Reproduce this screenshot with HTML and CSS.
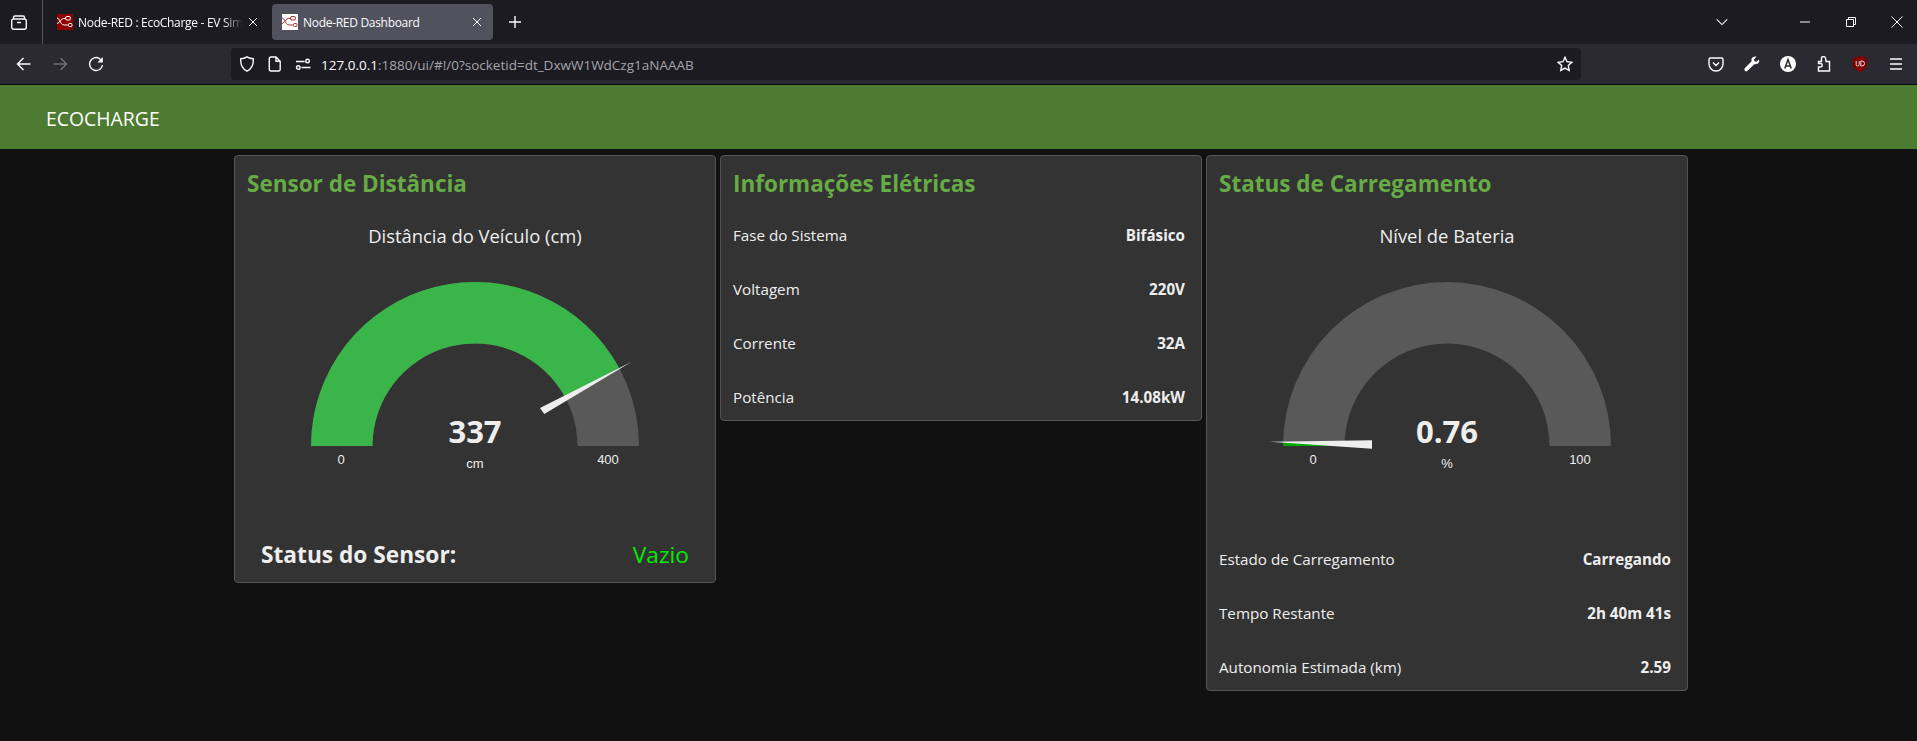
FILE: index.html
```html
<!DOCTYPE html>
<html lang="pt-BR">
<head>
    <meta charset="UTF-8">
    <meta name="viewport" content="width=device-width, initial-scale=1.0">
    <title>Node-RED Dashboard</title>
    <link rel="stylesheet" href="styles.css">
</head>
<body>
    <div class="tabbar">
        <div class="tab-view">
            <svg class="icon" viewBox="0 0 16 16"><path d="M2.500 5V3.500a1.500 1.500 0 0 1 1.500-1.500h8a1.500 1.500 0 0 1 1.500 1.500V5M.7 7a2 2 0 0 1 2-2h10.600a2 2 0 0 1 2 2v6.300a2 2 0 0 1-2 2H2.700a2 2 0 0 1-2-2zM6 8.500h4"/></svg>
        </div>
        <div class="tab">
            <svg class="favicon" viewBox="0 0 16 16"><rect width="16" height="16" fill="#8f0000"/><path d="M0 4c3 0 3 7 7 7h4M9 4.500H6.500C4 4.500 3 9 0 9.500" fill="none" stroke="#fff"/><rect x="8.500" y="2.500" width="5" height="3.500" rx="1.500" fill="none" stroke="#fff"/><rect x="11.500" y="9.500" width="3.500" height="3" rx="1" fill="none" stroke="#fff"/></svg>
            <span class="tab-title fade">Node-RED : EcoCharge - EV Sim</span>
            <svg class="tab-close" viewBox="0 0 10 10"><path d="M1 1l8 8M9 1l-8 8"/></svg>
        </div>
        <div class="tab tab-active">
            <svg class="favicon" viewBox="0 0 16 16"><rect width="16" height="16" fill="#fff"/><path d="M0 4c3 0 3 7 7 7h4M9 4.500H6.500C4 4.500 3 9 0 9.500" fill="none" stroke="#a33"/><rect x="8.500" y="2.500" width="5" height="3.500" rx="1.500" fill="none" stroke="#a33"/><rect x="11.500" y="9.500" width="3.500" height="3" rx="1" fill="none" stroke="#a33"/></svg>
            <span class="tab-title">Node-RED Dashboard</span>
            <svg class="tab-close" viewBox="0 0 10 10"><path d="M1 1l8 8M9 1l-8 8"/></svg>
        </div>
        <svg class="icon new-tab" viewBox="0 0 16 16"><path d="M8 2v12M2 8h12"/></svg>
        <div class="window-controls">
            <svg class="icon chevron" viewBox="0 0 16 16"><path d="M2 5l6 6 6-6"/></svg>
            <svg class="icon win-min" viewBox="0 0 12 12"><path d="M1 6h10"/></svg>
            <svg class="icon win-restore" viewBox="0 0 12 12"><path d="M1.500 3.500h7v7h-7zM3.500 3.500v-2h7v7h-2"/></svg>
            <svg class="icon win-close" viewBox="0 0 12 12"><path d="M.5 .5l11 11M11.500 .5l-11 11"/></svg>
        </div>
    </div>

    <div class="toolbar">
        <svg class="icon nav-back" viewBox="0 0 16 16"><path d="M14.500 8H1.500M7.500 2L1.500 8l6 6"/></svg>
        <svg class="icon nav-forward" viewBox="0 0 16 16"><path d="M1.500 8h13M8.500 2l6 6-6 6"/></svg>
        <svg class="icon nav-reload" viewBox="0 0 16 16"><path d="M14.500 9A6.500 6.500 0 1 1 11.500 2.500L14 5.500"/><path class="icon-fill" d="M14.800 1v5.500H9.300z"/></svg>
        <div class="urlbar">
            <svg class="icon url-shield" viewBox="0 0 16 16"><path d="M8 .8c2 1.200 4 1.800 6.300 2 .3 5.700-1.700 10-6.300 12.400C3.400 12.800 1.400 8.500 1.700 2.800 4 2.600 6 2 8 .8z"/></svg>
            <svg class="icon url-doc" viewBox="0 0 16 16"><path d="M3.800 1h5.200l4.200 4.200v8.300a1.500 1.500 0 0 1-1.500 1.500H3.800a1.500 1.500 0 0 1-1.500-1.500v-11A1.500 1.500 0 0 1 3.800 1zM9 1v4.200h4.200"/></svg>
            <svg class="icon url-perm" viewBox="0 0 16 16"><path d="M1 5.500h8.500M6.500 11.500h9"/><circle cx="12.500" cy="5" r="1.800"/><circle cx="3.300" cy="11.500" r="1.800"/></svg>
            <span class="url-text"><span class="url-host">127.0.0.1</span>:1880/ui/#!/0?socketid=dt_DxwW1WdCzg1aNAAAB</span>
            <svg class="icon url-star" viewBox="0 0 16 16"><path d="M8 1.300l2 4.400 4.800.6-3.500 3.300.9 4.800L8 12.100l-4.200 2.300.9-4.800L1.200 6.300 6 5.700z"/></svg>
        </div>
        <div class="extensions">
            <svg class="icon" viewBox="0 0 16 16"><path d="M2.500 2h11A1.500 1.500 0 0 1 15 3.500V8a7 7 0 0 1-14 0V3.500A1.500 1.500 0 0 1 2.500 2zM5 6.500l3 3 3-3"/></svg>
            <svg class="icon icon-fill" viewBox="0 0 16 16"><path d="M15 3.500l-2.500 2.300-2-.5-.5-2L12.500.8C10.500 0 8 1 7.500 3c-.2.800-.1 1.500.1 2.200L1 12c-1 1-.8 2 0 2.800s2 .8 2.800-.2l6.800-6.600c2.400.8 5.400-1.200 4.400-4.500z"/></svg>
            <svg class="ext-round" viewBox="0 0 16 16"><circle cx="8" cy="8" r="8" fill="#fff"/><path d="M4.800 12.500L8 3.500l3.200 9M6 10h4" fill="none" stroke="#2b2a33" stroke-width="1.500"/></svg>
            <svg class="icon" viewBox="0 0 16 16"><path d="M5.500 5.500V3a2 2 0 0 1 4-1l.5 3.500h3.500v9.500H2.500v-4h2a1.700 1.700 0 0 0 0-3.500h-2V5.500z"/></svg>
            <svg class="ext-round" viewBox="0 0 16 16"><path d="M8 0l7 2v7c0 3-3.500 5.500-7 7-3.500-1.500-7-4-7-7V2z" fill="#800000"/><path d="M4.200 5v3.500a1.500 1.500 0 0 0 3 0V5M8.800 5v5h1.200a2.500 2.500 0 0 0 0-5z" fill="none" stroke="#ddd"/></svg>
            <svg class="icon" viewBox="0 0 16 16"><path d="M2 3h12M2 8h12M2 13h12"/></svg>
        </div>
    </div>

    <header class="app-header">ECOCHARGE</header>

    <main class="content">
        <section class="card">
            <h2>Sensor de Distância</h2>
            <div class="gauge-title">Distância do Veículo (cm)</div>
            <svg class="gauge" viewBox="0 0 480 270">
                <path class="arc-bg" d="M76 188A164 164 0 0 1 404 188H342.500A102.500 102.500 0 0 0 137.500 188Z"/>
                <path class="arc-value" d="M76 188A164 164 0 0 1 384.300 110.100L330.200 139.300A102.500 102.500 0 0 0 137.500 188Z"/>
                <polygon class="needle" points="396.700,103.700 305,150 309.300,156"/>
                <text class="gauge-value" x="240" y="185">337</text>
                <text class="gauge-small" x="106" y="206">0</text>
                <text class="gauge-small" x="240" y="210">cm</text>
                <text class="gauge-small" x="373" y="206">400</text>
            </svg>
            <div class="status-row">
                <span class="status-label">Status do Sensor:</span>
                <span class="status-value">Vazio</span>
            </div>
        </section>

        <section class="card">
            <h2>Informações Elétricas</h2>
            <div class="rows">
                <div class="row"><span>Fase do Sistema</span><b>Bifásico</b></div>
                <div class="row"><span>Voltagem</span><b>220V</b></div>
                <div class="row"><span>Corrente</span><b>32A</b></div>
                <div class="row"><span>Potência</span><b>14.08kW</b></div>
            </div>
        </section>

        <section class="card">
            <h2>Status de Carregamento</h2>
            <div class="gauge-title">Nível de Bateria</div>
            <svg class="gauge" viewBox="0 0 480 270">
                <path class="arc-bg" d="M76 188A164 164 0 0 1 404 188H342.500A102.500 102.500 0 0 0 137.500 188Z"/>
                <path class="arc-low" d="M76 188A164 164 0 0 1 76.050 184.100L137.530 185.550A102.500 102.500 0 0 0 137.500 188Z"/>
                <polygon class="needle" points="62.300,183.700 165,182.300 165,190.700"/>
                <text class="gauge-value" x="240" y="185">0.76</text>
                <text class="gauge-small" x="106" y="206">0</text>
                <text class="gauge-small" x="240" y="210">%</text>
                <text class="gauge-small" x="373" y="206">100</text>
            </svg>
            <div class="rows rows-spaced">
                <div class="row"><span>Estado de Carregamento</span><b>Carregando</b></div>
                <div class="row"><span>Tempo Restante</span><b>2h 40m 41s</b></div>
                <div class="row"><span>Autonomia Estimada (km)</span><b>2.59</b></div>
            </div>
        </section>
    </main>
</body>
</html>
```

FILE: styles.css
```css
* {
    box-sizing: border-box;
}
html, body {
    height: 100%;
}
body {
    margin: 0;
    background-color: #111111;
    color: #eeeeee;
    font-family: "Open Sans", "Noto Sans", sans-serif;
    overflow: hidden;
}
.icon {
    width: 16px;
    height: 16px;
    flex: none;
    fill: none;
    stroke: #fbfbfe;
    stroke-width: 1.4;
}
.icon-fill {
    fill: #fbfbfe;
    stroke: none;
}

/* barra de abas */
.tabbar {
    height: 44px;
    background-color: #1c1b22;
    display: flex;
    align-items: center;
}
.tab-view {
    width: 43px;
    height: 44px;
    flex: none;
    display: flex;
    align-items: center;
    justify-content: center;
    padding-left: 1px;
    padding-right: 5px;
    border-right: 1px solid #55555c;
}
.tab {
    width: 221px;
    height: 36px;
    flex: none;
    margin-left: 4px;
    padding: 0 11px 0 10px;
    display: flex;
    align-items: center;
    gap: 5px;
    border-radius: 4px;
    font-size: 12px;
    letter-spacing: -0.3px;
    color: #fbfbfe;
}
.tab:first-of-type {
    margin-left: 5px;
}
.tab-active {
    background-color: #52525e;
}
.favicon {
    width: 16px;
    height: 16px;
    flex: none;
}
.tab-title {
    flex: 1;
    white-space: nowrap;
}
.fade {
    -webkit-mask-image: linear-gradient(to right, #000 88%, transparent);
    mask-image: linear-gradient(to right, #000 88%, transparent);
}
.tab-close {
    width: 10px;
    height: 10px;
    flex: none;
    fill: none;
    stroke: #fbfbfe;
}
.new-tab {
    margin-left: 14px;
}
.window-controls {
    margin-left: auto;
    padding-right: 14px;
    display: flex;
    align-items: center;
}
.chevron {
    width: 14px;
    height: 14px;
    margin-right: 70px;
    stroke-width: 1.2;
}
.win-min, .win-restore, .win-close {
    width: 12px;
    height: 12px;
    stroke-width: 1;
}
.win-restore {
    margin: 0 34px;
}

/* barra de navegacao */
.toolbar {
    height: 41px;
    background-color: #2b2a33;
    border-bottom: 1px solid #0c0c0d;
    display: flex;
    align-items: center;
    padding-left: 16px;
}
.nav-forward {
    margin-left: 20px;
    stroke: #6f6e75;
}
.nav-reload {
    margin-left: 20px;
}
.urlbar {
    width: 1350px;
    height: 32px;
    margin-left: 127px;
    background-color: #1c1b22;
    border-radius: 4px;
    display: flex;
    align-items: center;
    padding: 0 8px;
    font-size: 13.5px;
    color: #a5a5ab;
}
.url-doc {
    margin-left: 12px;
}
.url-perm {
    margin-left: 12px;
}
.url-text {
    margin-left: 10px;
    padding-top: 2px;
    white-space: nowrap;
}
.url-host {
    color: #fbfbfe;
}
.url-star {
    margin-left: auto;
}
.extensions {
    margin-left: 127px;
    display: flex;
    align-items: center;
    gap: 20px;
}
.ext-round {
    width: 16px;
    height: 16px;
    flex: none;
}

/* painel */
.app-header {
    height: 64px;
    background-color: #4d7b31;
    color: #ffffff;
    font-size: 19.4px;
    line-height: 68px;
    padding-left: 46px;
}
.content {
    display: flex;
    align-items: flex-start;
    gap: 4px;
    padding: 6px 0 0 234px;
}
.card {
    width: 482px;
    flex: none;
    background-color: #333333;
    border: 1px solid #555555;
    border-radius: 4px;
}
h2 {
    margin: 0;
    height: 58px;
    padding: 12px 12px 0;
    font-size: 22.5px;
    line-height: 32px;
    font-weight: 700;
    color: #67ab45;
}
.gauge-title {
    height: 44px;
    line-height: 43px;
    text-align: center;
    font-size: 18.4px;
}
.gauge {
    display: block;
    width: 480px;
    height: 270px;
}
.arc-bg {
    fill: #595959;
}
.arc-value {
    fill: #3ab54a;
}
.arc-low {
    fill: #00aa00;
}
.needle {
    fill: #eeeeee;
}
.gauge-value {
    font-size: 31px;
    font-weight: 700;
    fill: #eeeeee;
    text-anchor: middle;
}
.gauge-small {
    font-family: "Liberation Sans", Arial, sans-serif;
    font-size: 13px;
    fill: #eeeeee;
    text-anchor: middle;
}
.status-row {
    height: 54px;
    padding: 0 26px 2px;
    display: flex;
    align-items: center;
    justify-content: space-between;
    font-size: 22.7px;
}
.status-label {
    font-weight: 700;
}
.status-value {
    color: #00ee00;
}
.rows {
    display: flex;
    flex-direction: column;
    gap: 10px;
}
.rows-spaced {
    margin-top: 10px;
}
.row {
    height: 44px;
    padding: 0 16px 2px 12px;
    display: flex;
    align-items: center;
    justify-content: space-between;
    font-size: 15.2px;
}
```
